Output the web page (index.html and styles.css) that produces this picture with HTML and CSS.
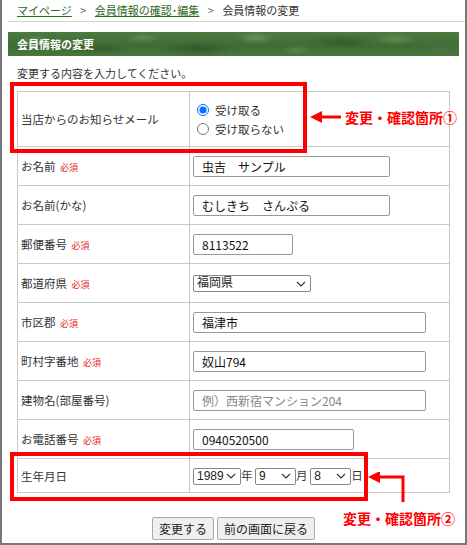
FILE: index.html
```html
<!DOCTYPE html>
<html lang="ja">
  <head>
    <meta charset="UTF-8" />
    <title>会員情報の変更</title>
    <link rel="stylesheet" href="styles.css">
  </head>
  <body>
    <div class="page">
      <div class="breadcrumb">
        <a href="#">マイページ</a>
        <span class="sep">&gt;</span>
        <a href="#">会員情報の確認･編集</a>
        <span class="sep">&gt;</span>
        <span>会員情報の変更</span>
      </div>

      <div class="content">
        <h2 class="title-bar">会員情報の変更</h2>
        <p class="intro">変更する内容を入力してください。</p>

        <table class="form-table">
          <tr class="tall">
            <th>当店からのお知らせメール</th>
            <td>
              <label class="radio"><input type="radio" name="mail" checked> 受け取る</label>
              <label class="radio"><input type="radio" name="mail"> 受け取らない</label>
            </td>
          </tr>
          <tr>
            <th>お名前 <span class="req">必須</span></th>
            <td><input type="text" class="w-name" value="虫吉　サンプル"></td>
          </tr>
          <tr>
            <th>お名前(かな)</th>
            <td><input type="text" class="w-name" value="むしきち　さんぷる"></td>
          </tr>
          <tr>
            <th>郵便番号 <span class="req">必須</span></th>
            <td><input type="text" class="w-zip" value="8113522"></td>
          </tr>
          <tr>
            <th>都道府県 <span class="req">必須</span></th>
            <td>
              <select class="w-pref">
                <option>福岡県</option>
              </select>
            </td>
          </tr>
          <tr>
            <th>市区郡 <span class="req">必須</span></th>
            <td><input type="text" class="w-long" value="福津市"></td>
          </tr>
          <tr>
            <th>町村字番地 <span class="req">必須</span></th>
            <td><input type="text" class="w-long" value="奴山794"></td>
          </tr>
          <tr>
            <th>建物名(部屋番号)</th>
            <td><input type="text" class="w-long" placeholder="例）西新宿マンション204"></td>
          </tr>
          <tr>
            <th>お電話番号 <span class="req">必須</span></th>
            <td><input type="text" class="w-tel" value="0940520500"></td>
          </tr>
          <tr class="short">
            <th>生年月日</th>
            <td class="birth">
              <select class="w-year"><option>1989</option></select>年
              <select class="w-day"><option>9</option></select>月
              <select class="w-day"><option>8</option></select>日
            </td>
          </tr>
        </table>

        <div class="actions">
          <button type="button">変更する</button>
          <button type="button">前の画面に戻る</button>
        </div>
      </div>

      <!-- annotations -->
      <div class="mark mark-1"></div>
      <div class="note note-1">
        <svg width="32" height="12" viewBox="0 0 32 12">
          <path d="M31 6H8" stroke="#f00" stroke-width="3" fill="none"/>
          <path d="M0 6L12 0V12Z" fill="#f00"/>
        </svg>
        <span>変更・確認箇所①</span>
      </div>

      <div class="mark mark-2"></div>
      <svg class="arrow-2" width="38" height="30" viewBox="0 0 38 30">
        <path d="M35 30V5H8" stroke="#f00" stroke-width="3" fill="none"/>
        <path d="M0 5L12 -1V11Z" fill="#f00"/>
      </svg>
      <div class="note note-2">変更・確認箇所②</div>
    </div>
  </body>
</html>
```

FILE: styles.css
```css
body {
  margin: 0;
  font-family: "Noto Sans CJK JP", "Liberation Sans", sans-serif;
  color: #333;
  background: #fff;
}
.page {
  position: relative;
  width: 467px;
  height: 545px;
  box-sizing: border-box;
  border: 2px solid #777;
  border-top: none;
}
.breadcrumb {
  margin-left: 6px;
  padding: 3px 0 0 9px;
  height: 18px;
  border-bottom: 1px solid #d4d4c8;
  font-size: 11px;
  line-height: 15px;
}
.breadcrumb a {
  color: #2d6a1f;
}
.breadcrumb .sep {
  color: #666;
  margin: 0 6px;
}
.content {
  padding: 10px 6px 0 6px;
}
.title-bar {
  margin: 0;
  height: 24px;
  padding-left: 9px;
  font-size: 11px;
  line-height: 24px;
  color: #fff;
  font-weight: bold;
  background:
    radial-gradient(ellipse 14px 5px at 6% 35%, rgba(150, 190, 130, 0.35), transparent),
    radial-gradient(ellipse 30px 6px at 20% 70%, rgba(30, 60, 25, 0.35), transparent),
    radial-gradient(ellipse 18px 5px at 30% 25%, rgba(150, 190, 130, 0.3), transparent),
    radial-gradient(ellipse 40px 8px at 42% 70%, rgba(30, 60, 25, 0.4), transparent),
    radial-gradient(ellipse 20px 6px at 55% 25%, rgba(160, 200, 140, 0.35), transparent),
    radial-gradient(ellipse 16px 5px at 64% 75%, rgba(140, 180, 120, 0.3), transparent),
    radial-gradient(ellipse 35px 7px at 74% 40%, rgba(25, 55, 25, 0.35), transparent),
    radial-gradient(ellipse 22px 6px at 86% 30%, rgba(140, 180, 120, 0.35), transparent),
    radial-gradient(ellipse 20px 6px at 96% 70%, rgba(90, 120, 90, 0.4), transparent),
    linear-gradient(#4b7b3e, #3f6c35 60%, #48763c);
}
.intro {
  margin: 0;
  padding: 10px 0 0 9px;
  height: 25px;
  font-size: 11px;
  line-height: 14px;
}
.form-table {
  margin-left: 9px;
  width: 433px;
  border-collapse: collapse;
  font-size: 11.5px;
}
.form-table th,
.form-table td {
  border: 1px solid #c8c8c8;
  height: 38px;
  padding: 0 0 0 3px;
  text-align: left;
  vertical-align: middle;
}
.form-table th {
  width: 168px;
  font-weight: normal;
}
.form-table tr.tall th,
.form-table tr.tall td {
  height: 54px;
}
.form-table tr.short th,
.form-table tr.short td {
  height: 33px;
}
.req {
  color: #e8261c;
  font-size: 9px;
  margin-left: 2px;
}
.radio {
  display: flex;
  align-items: center;
  height: 19px;
  padding-left: 4px;
}
.radio input {
  margin: 0 6px 0 0;
  width: 12px;
  height: 12px;
}
input[type="text"] {
  box-sizing: border-box;
  height: 21px;
  padding: 0 8px;
  border: 1px solid #999;
  border-radius: 2px;
  font-family: inherit;
  font-size: 12px;
  color: #111;
}
input::placeholder {
  color: #888;
}
.w-name { width: 197px; }
.w-zip { width: 100px; }
.w-long { width: 233px; }
.w-tel { width: 161px; }
select {
  appearance: none;
  -webkit-appearance: none;
  box-sizing: border-box;
  height: 17px;
  font-family: "Liberation Sans", "Noto Sans CJK JP", sans-serif;
  font-size: 12px;
  line-height: 15px;
  padding: 0 14px 0 3px;
  border: 1px solid #888;
  border-radius: 2px;
  color: #222;
  background: #fff url("data:image/svg+xml,%3Csvg xmlns='http://www.w3.org/2000/svg' width='10' height='6' viewBox='0 0 10 6'%3E%3Cpath d='M1 1l4 4 4-4' fill='none' stroke='%23333' stroke-width='1.1'/%3E%3C/svg%3E") no-repeat right 4px center;
}
.w-pref { width: 118px; }
.w-year { width: 48px; }
.w-day { width: 41px; }
.birth select {
  margin: 0;
}
.actions {
  padding-top: 24px;
  display: flex;
  justify-content: center;
  gap: 3px;
}
.actions button {
  height: 23px;
  padding: 0 6px;
  font-family: inherit;
  font-size: 12px;
  color: #222;
  background: #efefef;
  border: 1px solid #aaa;
  border-radius: 2px;
}
.mark {
  position: absolute;
  border: 4px solid #f00;
  box-sizing: border-box;
}
.mark-1 {
  left: 8px;
  top: 82px;
  width: 297px;
  height: 71px;
}
.mark-2 {
  left: 8px;
  top: 452px;
  width: 358px;
  height: 49px;
}
.note {
  position: absolute;
  color: #f00;
  font-weight: bold;
  font-size: 14px;
  line-height: 16px;
}
.note-1 {
  left: 308px;
  top: 109px;
  display: flex;
  align-items: center;
  gap: 3px;
}
.note-2 {
  left: 341px;
  top: 510px;
}
.arrow-2 {
  position: absolute;
  left: 366px;
  top: 472px;
}
```
